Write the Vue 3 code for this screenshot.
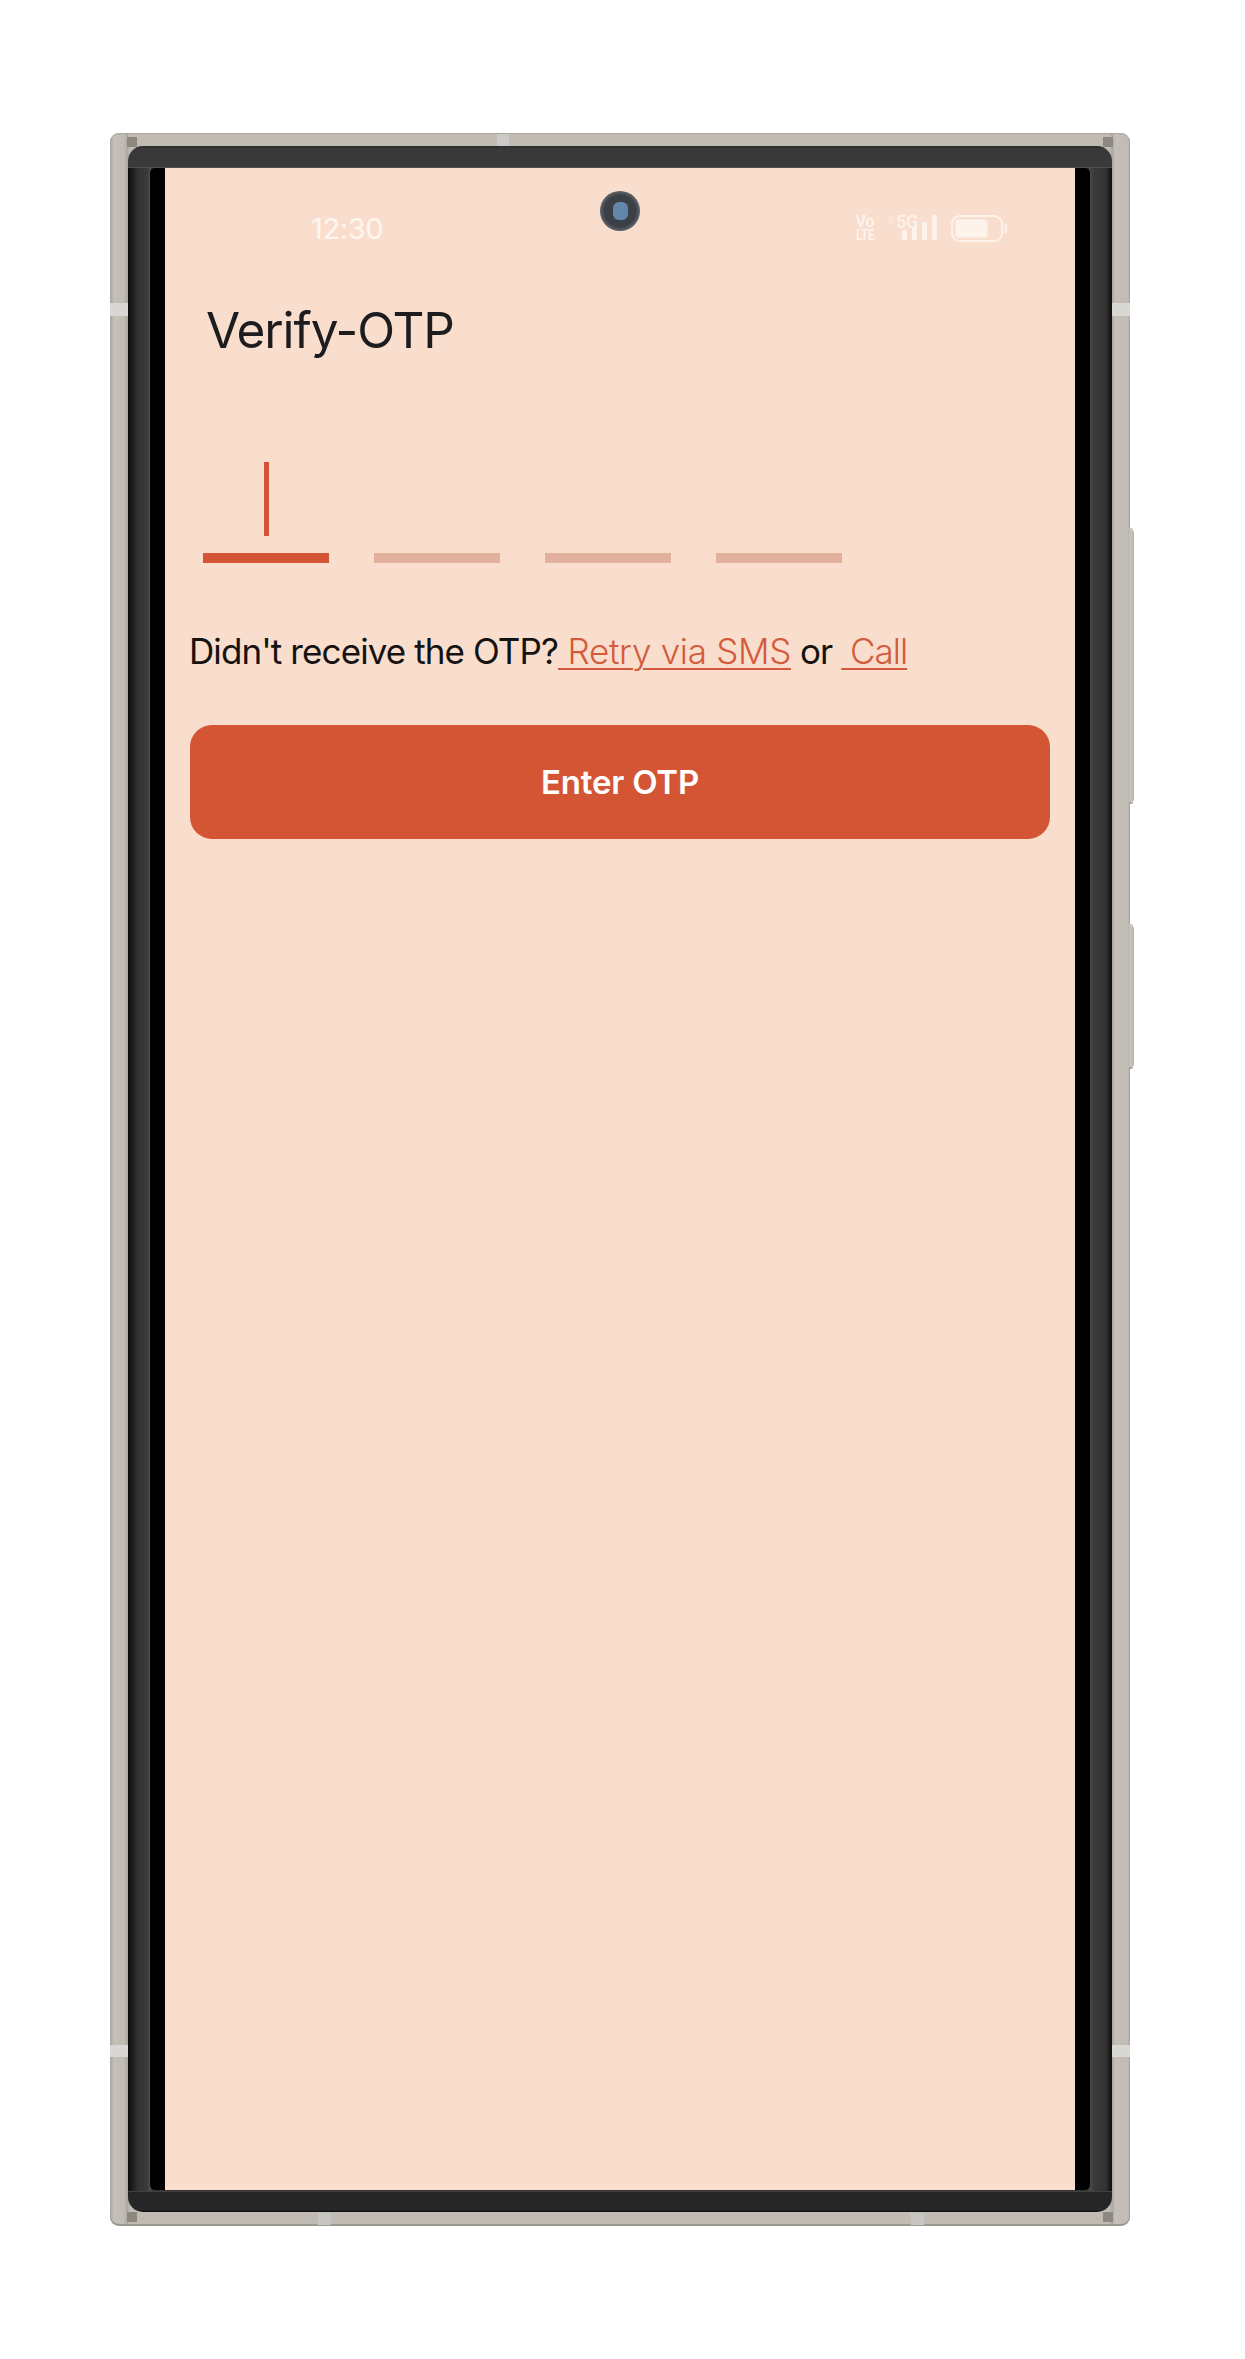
<script setup>
const cells = [0, 1, 2, 3]
const antennas = ['band-tl', 'band-tr', 'band-ll', 'band-lr', 'band-top', 'band-bl', 'band-br']
const corners = ['patch-tl', 'patch-tr', 'patch-bl', 'patch-br']
</script>

<template>
  <div class="page">
    <div class="phone">
      <div v-for="c in corners" :key="c" class="patch" :class="c"></div>
      <div v-for="a in antennas" :key="a" class="band" :class="a"></div>
      <div class="side-key key-power"></div>
      <div class="side-key key-volume"></div>
      <div class="bezel">
        <div class="glass">
          <div class="screen">
            <div class="camera"><div class="lens"></div></div>
            <div class="status">
              <span class="time">12:30</span>
              <div class="status-icons">
                <div class="volte"><span class="vo">Vo</span><span class="lte">LTE</span></div>
                <div class="signal">
                  <svg width="52" height="26" viewBox="0 0 52 26">
                    <path d="M4.5 0.5 8.5 4.5H0.5ZM4.5 10 0.5 6H8.5Z" fill="#fdf3ec" opacity="0.3" />
                    <rect x="16" y="15" width="5" height="10" rx="1" fill="#fdf3ec" />
                    <rect x="26" y="12" width="5" height="13" rx="1" fill="#fdf3ec" />
                    <rect x="36" y="7" width="5" height="18" rx="1" fill="#fdf3ec" />
                    <rect x="46" y="0" width="5" height="25" rx="1" fill="#fdf3ec" />
                  </svg>
                  <span class="five-g">5G</span>
                </div>
                <svg class="battery" width="56" height="27" viewBox="0 0 56 27">
                  <rect x="1" y="1" width="50" height="25" rx="8" fill="none" stroke="#fdf3ec" stroke-width="2" />
                  <rect x="4.5" y="4.5" width="32" height="18" rx="3" fill="#fdf3ec" />
                  <rect x="53.5" y="8.5" width="2.5" height="10" rx="1.2" fill="#fdf3ec" opacity="0.8" />
                </svg>
              </div>
            </div>
            <div class="content">
              <h1 class="title">Verify-OTP</h1>
              <div class="otp">
                <div v-for="i in cells" :key="i" class="cell">
                  <div class="caret-slot"><div v-if="i === 0" class="caret"></div></div>
                  <div class="bar" :class="{ active: i === 0 }"></div>
                </div>
              </div>
              <p class="retry">Didn't receive the OTP?<a class="link"> Retry via SMS</a> or <a class="link call"> Call</a></p>
              <button class="enter" type="button">Enter OTP</button>
            </div>
          </div>
        </div>
      </div>
    </div>
  </div>
</template>

<style>
html, body { margin: 0; background: #ffffff; }
</style>

<style scoped>
.page {
  width: 1245px;
  height: 2359px;
  padding: 133px 0 0 110px;
  box-sizing: border-box;
  background: #ffffff;
  font-family: Inter, "Noto Sans", sans-serif;
}
.phone {
  position: relative;
  width: 1020px;
  height: 2093px;
  box-sizing: border-box;
  padding: 13px 18px 14px;
  border-radius: 9px;
  background: linear-gradient(90deg, #a9a49c 0, #c4bfb8 4px, #c0bbb3 14px, #aaa59d 18px, #c0bbb3 19px, #c0bbb3 1000px, #aaa59d 1002px, #c4bfb8 1005px, #c0bbb3 1018px, #a5a098 1020px);
  box-shadow: inset 0 1px 0 #aaa59d, inset 0 -2px 0 #9d9890;
}
.patch {
  position: absolute;
  width: 10px;
  height: 10px;
  background: #8c877f;
}
.patch-tl { left: 17px; top: 4px; }
.patch-tr { right: 17px; top: 4px; }
.patch-bl { left: 17px; bottom: 4px; }
.patch-br { right: 17px; bottom: 4px; }
.band {
  position: absolute;
  background: #d8d7d4;
}
.band-tl { left: 0; top: 170px; width: 18px; height: 13px; }
.band-tr { right: 0; top: 170px; width: 18px; height: 13px; }
.band-ll { left: 0; top: 1912px; width: 18px; height: 12px; }
.band-lr { right: 0; top: 1912px; width: 18px; height: 12px; }
.band-top { left: 387px; top: 1px; width: 12px; height: 12px; background: #cbcac8; }
.band-bl { left: 208px; bottom: 1px; width: 13px; height: 12px; background: #c8c6c3; }
.band-br { left: 801px; bottom: 1px; width: 13px; height: 12px; background: #c8c6c3; }
.side-key {
  position: absolute;
  left: 1018px;
  width: 6px;
  border-radius: 0 3px 3px 0;
  background: linear-gradient(90deg, #bdb8b0, #c7c3bc 60%, #b5b0a8);
  box-shadow: 0 -3px 0 -1px #c9c5bf, 0 3px 0 -1px #a9a49c;
}
.key-power { top: 397px; height: 272px; }
.key-volume { top: 793px; height: 141px; }
.bezel {
  position: relative;
  height: 100%;
  box-sizing: border-box;
  padding: 22px;
  border-radius: 15px;
  background:
    linear-gradient(180deg, #2b2b2b 0, #393939 3px, #393939 21px, #66625c 22px) top / 100% 22px no-repeat,
    linear-gradient(180deg, #5a5a5a 0, #262626 1px, #262626 19px, #0c0c0c 21px) bottom / 100% 21px no-repeat,
    linear-gradient(90deg, #0c0c0c 0, #333 10px, #3b3b3b 20px, #555 22px, #333 24px, #333 960px, #4a4a4a 962px, #3a3a3a 966px, #333 978px, #0c0c0c 984px);
}
.glass {
  height: 100%;
  padding: 0 15px;
  box-sizing: border-box;
  background: #000;
  border-radius: 5px;
}
.screen {
  position: relative;
  height: 100%;
  background: #f9decd;
  display: flex;
  flex-direction: column;
}
.camera {
  position: absolute;
  left: 435px;
  top: 23px;
  width: 40px;
  height: 40px;
  border-radius: 50%;
  display: flex;
  align-items: center;
  justify-content: center;
  background: radial-gradient(circle, #3b4046 0, #3b4046 55%, #5a5f65 68%, #3c4045 85%, #55585c 100%);
}
.lens {
  width: 15px;
  height: 18px;
  border-radius: 6px;
  background: #6387ab;
}
.status {
  display: flex;
  align-items: center;
  justify-content: space-between;
  height: 32px;
  margin-top: 44px;
  padding: 0 68px 0 146px;
}
.time {
  font-size: 29px;
  font-weight: 400;
  letter-spacing: -0.4px;
  color: #fff6f0;
}
.status-icons {
  display: flex;
  align-items: flex-start;
}
.volte {
  display: flex;
  flex-direction: column;
  align-items: center;
  width: 20px;
  font-family: Roboto, sans-serif;
  font-weight: 700;
  color: #fdf3ec;
}
.vo { font-size: 16px; line-height: 13px; }
.lte { font-size: 14px; line-height: 12px; margin-top: 1px; transform: scaleX(0.8); }
.signal {
  position: relative;
  margin-left: 11px;
  height: 26px;
}
.signal svg { display: block; }
.five-g {
  position: absolute;
  left: 10px;
  top: 0;
  font-family: Roboto, sans-serif;
  font-size: 18px;
  line-height: 13px;
  font-weight: 500;
  letter-spacing: -0.3px;
  color: #fdf3ec;
}
.battery {
  display: block;
  margin-left: 13px;
}
.content {
  display: flex;
  flex-direction: column;
  padding: 0 25px;
}
.title {
  margin: 56px 0 0 16px;
  font-size: 49.5px;
  line-height: 60px;
  font-weight: 400;
  letter-spacing: -1.1px;
  color: #1d1c1e;
}
.otp {
  display: flex;
  gap: 45px;
  margin: 102px 0 0 13px;
}
.cell {
  width: 126px;
  display: flex;
  flex-direction: column;
  align-items: center;
}
.caret-slot {
  height: 74px;
  margin-bottom: 17px;
}
.caret {
  width: 5px;
  height: 74px;
  background: #d45533;
}
.bar {
  width: 100%;
  height: 10px;
  background: #e2b19d;
}
.bar.active { background: #d45533; }
.retry {
  margin: 63px 0 0 -1px;
  font-size: 35px;
  line-height: 50px;
  font-weight: 400;
  letter-spacing: -0.9px;
  color: #141312;
  white-space: pre;
}
.link {
  color: #d45a3c;
  font-weight: 300;
  letter-spacing: -0.3px;
  text-decoration: underline;
  text-decoration-thickness: 2px;
  text-underline-offset: 4px;
}
.link.call { letter-spacing: -1px; }
.enter {
  margin-top: 49px;
  height: 114px;
  border: 0;
  border-radius: 22px;
  background: #d45533;
  color: #fff;
  font-family: inherit;
  font-size: 33px;
  font-weight: 600;
  letter-spacing: -0.2px;
}
</style>
